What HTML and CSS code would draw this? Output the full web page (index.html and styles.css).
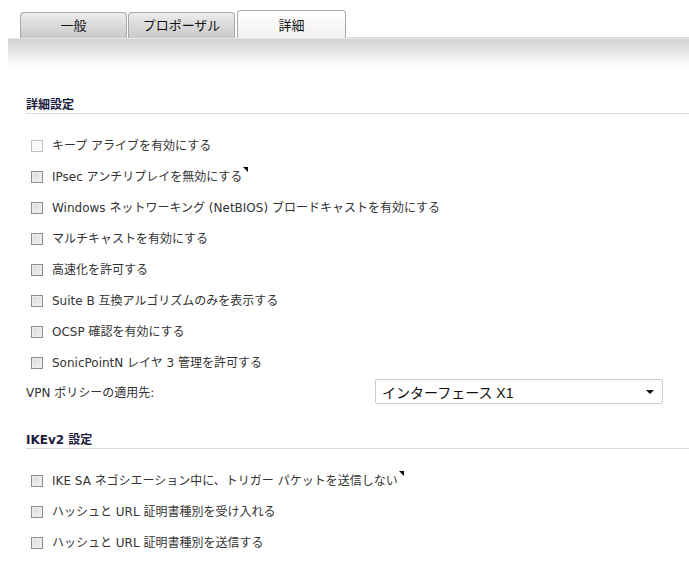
FILE: index.html
```html
<!DOCTYPE html>
<html lang="ja">
<head>
<meta charset="utf-8">
<link rel="stylesheet" href="styles.css">
</head>
<body>
<div class="tabs">
  <div class="tab">一般</div>
  <div class="tab">プロポーザル</div>
  <div class="tab active">詳細</div>
  <div class="tab-rest"></div>
</div>
<div class="band"></div>
<div class="content">
  <h2 class="section">詳細設定</h2>
  <div class="rows">
    <label class="row"><span class="cb disabled"></span>キープ アライブを有効にする</label>
    <label class="row"><span class="cb"></span>IPsec アンチリプレイを無効にする<span class="mark"></span></label>
    <label class="row"><span class="cb"></span>Windows ネットワーキング (NetBIOS) ブロードキャストを有効にする</label>
    <label class="row"><span class="cb"></span>マルチキャストを有効にする</label>
    <label class="row"><span class="cb"></span>高速化を許可する</label>
    <label class="row"><span class="cb"></span>Suite B 互換アルゴリズムのみを表示する</label>
    <label class="row"><span class="cb"></span>OCSP 確認を有効にする</label>
    <label class="row"><span class="cb"></span>SonicPointN レイヤ 3 管理を許可する</label>
  </div>
  <div class="field">
    <span class="field-label">VPN ポリシーの適用先:</span>
    <div class="select"><span>インターフェース X1</span><span class="arrow"></span></div>
  </div>
  <h2 class="section">IKEv2 設定</h2>
  <div class="rows">
    <label class="row"><span class="cb"></span>IKE SA ネゴシエーション中に、トリガー パケットを送信しない<span class="mark"></span></label>
    <label class="row"><span class="cb"></span>ハッシュと URL 証明書種別を受け入れる</label>
    <label class="row"><span class="cb"></span>ハッシュと URL 証明書種別を送信する</label>
  </div>
</div>
</body>
</html>
```
FILE: styles.css
```css
html, body {
  margin: 0;
  padding: 0;
  background: #fff;
}
body {
  font-family: "DejaVu Sans", "Noto Sans CJK JP", sans-serif;
  font-size: 12px;
  color: #333;
  width: 689px;
}
.tabs {
  display: flex;
  align-items: flex-end;
  height: 38px;
  padding-left: 20px;
  box-sizing: border-box;
}
.tab {
  width: 107px;
  height: 26px;
  margin-right: 1px;
  box-sizing: border-box;
  border: 1px solid #a8a8a8;
  border-bottom: none;
  border-radius: 4px 4px 0 0;
  background: linear-gradient(#ececec, #c9c9c9);
  text-align: center;
  line-height: 24px;
  font-family: "Noto Sans CJK JP", sans-serif;
  font-size: 13px;
  color: #111;
}
.tab.active {
  height: 28px;
  margin-left: 1px;
  width: 109px;
  background: linear-gradient(#ffffff, #f0f0f0);
  line-height: 27px;
}
.tab-rest {
  flex: 1;
  border-bottom: 1px solid #d4d4e4;
}
.band {
  margin-left: 8px;
  height: 28px;
  border-top: 1px solid #e4e4e4;
  background: linear-gradient(#d2d2d2, #ffffff);
}
.content {
  padding-left: 26px;
  padding-top: 31px;
}
.section {
  margin: 0;
  font-size: 12px;
  font-weight: bold;
  color: #1c1c40;
  padding-bottom: 0;
  border-bottom: 1px solid #d5dbe2;
  line-height: 15px;
}
.rows {
  padding-top: 24px;
  display: flex;
  flex-direction: column;
  gap: 15px;
}
.row {
  display: flex;
  align-items: center;
  height: 16px;
  padding-left: 5px;
  line-height: 16px;
}
.cb {
  width: 12px;
  height: 12px;
  box-sizing: border-box;
  border: 1px solid #8c8c8c;
  background: linear-gradient(135deg, #d8d8d8, #f4f4f4);
  box-shadow: inset 0 0 0 1px #eee;
  margin-right: 9px;
  flex: none;
}
.cb.disabled {
  border-color: #c0c0c0;
  background: #fafafa;
  box-shadow: none;
}
.mark {
  align-self: flex-start;
  margin-left: 1px;
  margin-top: -2px;
  width: 0;
  height: 0;
  border-top: 5px solid #000;
  border-left: 5px solid transparent;
}
.field {
  display: flex;
  align-items: center;
  margin-top: 8px;
  margin-bottom: 29px;
}
.field-label {
  width: 349px;
}
.select {
  width: 288px;
  height: 25px;
  box-sizing: border-box;
  border: 1px solid #c8ccd4;
  border-radius: 2px;
  display: flex;
  align-items: center;
  justify-content: space-between;
  padding: 0 8px 0 6px;
  font-family: "Liberation Sans", "Noto Sans CJK JP", sans-serif;
  font-size: 14px;
  color: #111;
}
.arrow {
  width: 0;
  height: 0;
  border-left: 4px solid transparent;
  border-right: 4px solid transparent;
  border-top: 4px solid #111;
}
```
